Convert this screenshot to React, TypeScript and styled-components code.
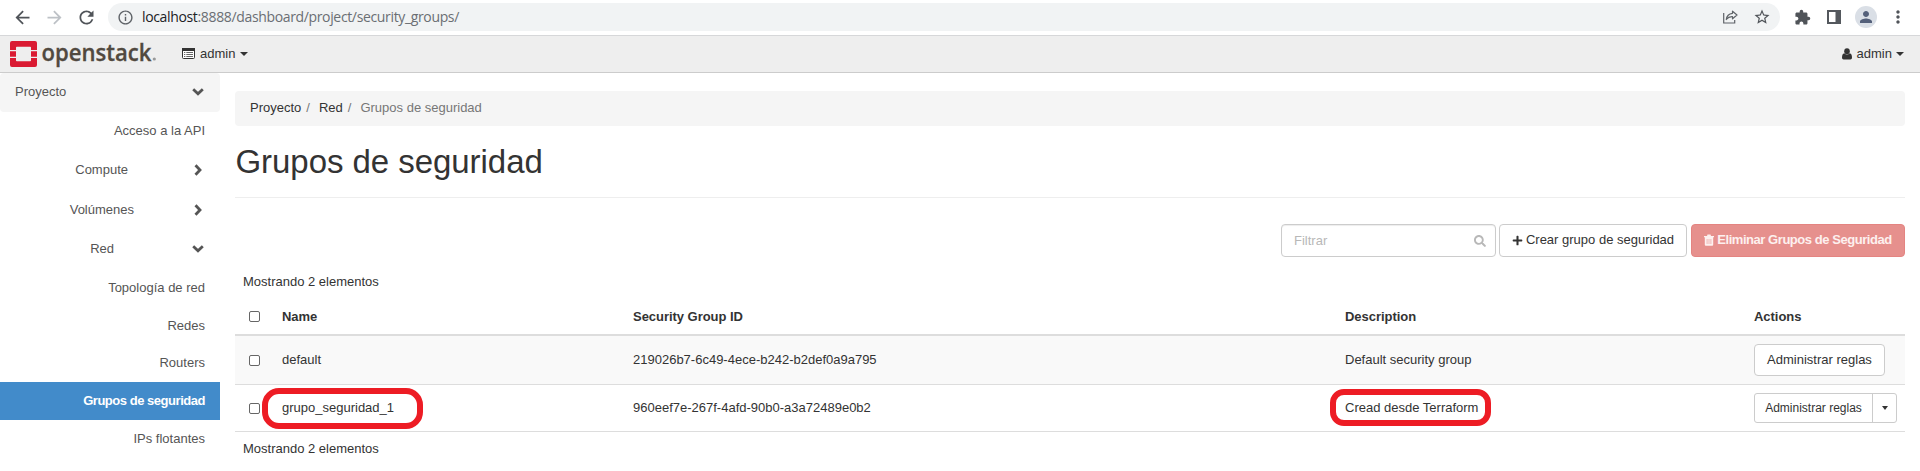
import React from "react";
import styled, { createGlobalStyle } from "styled-components";
import { MdArrowBack, MdArrowForward, MdRefresh, MdInfoOutline, MdStarBorder, MdExtension, MdPerson, MdMoreVert } from "react-icons/md";
import { FaPlus, FaSearch } from "react-icons/fa";

const Global = createGlobalStyle`
  * { box-sizing: border-box; }
  body { margin: 0; background: #fff; color: #333; overflow: hidden;
    font: 13px/18px "Liberation Sans", Arial, sans-serif; }
  svg { display: block; flex: none; overflow: visible; }
`;

const Browser = styled.div`
  height: 36px; display: flex; align-items: flex-start; color: #5f6368;
  border-bottom: 1px solid #d6d7d9; padding: 3px 11px 0 11px;
`;
const NavIcon = styled.span<{ $w: number; $dim?: boolean; $gap?: number }>`
  width: ${p => p.$w}px; height: 28px; display: flex; align-items: center; justify-content: center;
  color: ${p => (p.$dim ? "#bdc1c6" : "#505459")};
  margin-left: ${p => p.$gap ?? 0}px;
`;
const Omnibox = styled.div`
  width: 1672px; height: 28px; border-radius: 14px; background: #f1f3f4;
  display: flex; align-items: center; padding: 0 9px 0 9px; margin-left: 11px;
`;
const Url = styled.span`
  font: 14px/20px "Open Sans", sans-serif; letter-spacing: -0.35px; color: #6a6e73; margin-left: 8px; flex: 1;
  white-space: nowrap;
  b { font-weight: 400; color: #202124; }
`;
const Avatar = styled.span`
  width: 22px; height: 22px; border-radius: 50%; background: #dadfe6; color: #54607a;
  display: flex; align-items: center; justify-content: center;
`;

const Header = styled.header`
  height: 37px; background: #eee; border-bottom: 1px solid #ccc;
  display: flex; align-items: center; padding: 0 16px 0 10px;
`;
const Menu = styled.div<{ $left?: number }>`
  display: flex; align-items: center; gap: 5px; height: 36px; padding-bottom: 1px;
  margin-left: ${p => (p.$left === undefined ? "auto" : `${p.$left}px`)};
`;
const Caret = styled.i<{ $gap?: number }>`
  width: 0; height: 0; border: 4px solid transparent; border-top-color: #333; border-bottom: 0;
  margin-left: ${p => p.$gap ?? 0}px;
`;

const Body = styled.div`display: flex; height: 398px;`;
const Sidebar = styled.nav`width: 220px; color: #555;`;
const Group = styled.div`
  height: 39px; background: #f5f5f5; border-radius: 4px; padding: 0 16px 1px 15px;
  display: flex; align-items: center; justify-content: space-between;
`;
const Section = styled.div<{ $h: number; $gap: number }>`
  height: ${p => p.$h}px; display: flex; align-items: center; justify-content: flex-end;
  gap: ${p => p.$gap}px; padding-right: 16px;
`;
const ChevBox = styled.span`width: 12px; display: flex; justify-content: center;`;
const Item = styled.a<{ $h: number; $active?: boolean }>`
  height: ${p => p.$h}px; display: flex; align-items: center; justify-content: flex-end; padding-right: 15px;
  background: ${p => (p.$active ? "#428bca" : "transparent")};
  color: ${p => (p.$active ? "#fff" : "#555")};
  font-weight: ${p => (p.$active ? 700 : 400)};
  letter-spacing: ${p => (p.$active ? "-0.47px" : "0")};
`;

const Main = styled.main`flex: 1; padding: 18px 15px 0; display: flex; flex-direction: column;`;
const Crumbs = styled.div`
  height: 35px; background: #f5f5f5; border-radius: 4px; padding: 0 15px 1px;
  display: flex; align-items: center; color: #777;
  b { font-weight: 400; color: #333; }
  i { font-style: normal; margin: 0 9px 0 5px; }
`;
const Title = styled.h1`
  margin: 0; height: 72px; padding-top: 17px; border-bottom: 1px solid #eee;
  font-size: 33px; line-height: 38px; font-weight: 400; letter-spacing: -0.05px; text-indent: 0.5px;
`;
const Tools = styled.div`height: 33px; margin-top: 26px; display: flex; justify-content: flex-end;`;
const Filter = styled.div`
  width: 215px; border: 1px solid #ccc; border-radius: 4px; box-shadow: inset 0 1px 1px rgba(0,0,0,.075);
  display: flex; align-items: center; justify-content: space-between; padding: 0 9px 0 12px; color: #b8b8b8;
  margin-right: 3px;
`;
const Button = styled.button<{ $w: number; $h: number; $danger?: boolean }>`
  width: ${p => p.$w}px; height: ${p => p.$h}px; padding: 0 0 1px; white-space: nowrap;
  font: ${p => (p.$danger ? 700 : 400)} 13px/18px "Liberation Sans", Arial, sans-serif;
  letter-spacing: ${p => (p.$danger ? "-0.45px" : "0")};
  display: flex; align-items: center; justify-content: center; gap: 3px; border-radius: 4px;
  border: 1px solid ${p => (p.$danger ? "#e48481" : "#ccc")};
  background: ${p => (p.$danger ? "#e6908d" : "#fff")};
  color: ${p => (p.$danger ? "#fdf0ef" : "#333")};
  margin-left: ${p => (p.$danger ? 4 : 0)}px;
`;
const Split = styled.div`
  display: flex; width: 143px; height: 30px; border: 1px solid #ccc; border-radius: 3px; background: #fff;
  font-size: 12px;
`;
const SplitPart = styled.span<{ $w: number; $line?: boolean }>`
  width: ${p => p.$w}px; display: flex; align-items: center; justify-content: center;
  border-left: ${p => (p.$line ? "1px solid #ccc" : "0")};
  i { border-width: 4px 3.5px 0; }
`;
const Count = styled.div<{ $top: number }>`padding: ${p => p.$top}px 0 0 8px; height: ${p => p.$top + 18}px;`;
const Row = styled.div<{ $h: number; $kind?: "head" | "odd" }>`
  height: ${p => p.$h}px; display: grid; grid-template-columns: 47px 351px 712px 409px 1fr; align-items: center;
  border-bottom: ${p => (p.$kind === "head" ? 2 : 1)}px solid #ddd;
  background: ${p => (p.$kind === "odd" ? "#f9f9f9" : "#fff")};
  font-weight: ${p => (p.$kind === "head" ? 700 : 400)};
  letter-spacing: ${p => (p.$kind === "head" ? "-0.04px" : "0")};
  padding-top: ${p => (p.$kind === "head" ? 8 : 0)}px;
`;
const Check = styled.span`
  width: 11px; height: 11px; border: 1px solid #666; border-radius: 2px; background: #fff; margin-left: 14px;
`;
const Cell = styled.span`position: relative; justify-self: start;`;
const Mark = styled.span<{ $w: number; $h: number; $x: number; $y: number; $r: number }>`
  position: absolute; left: ${p => p.$x}px; top: ${p => p.$y}px; width: ${p => p.$w}px; height: ${p => p.$h}px;
  border: 6px solid #ed1c24; border-radius: ${p => p.$r}px;
`;

const Chevron = ({ down }: { down?: boolean }) => (
  <ChevBox>
    {down ? (
      <svg width="12" height="8" viewBox="0 0 12 8"><path d="M1.2 1.3 6 5.8l4.8-4.5" fill="none" stroke="#555" strokeWidth="2.8" /></svg>
    ) : (
      <svg width="8" height="12" viewBox="0 0 8 12"><path d="M1.500 1.200 6 6l-4.500 4.800" fill="none" stroke="#555" strokeWidth="2.8" /></svg>
    )}
  </ChevBox>
);

const Logo = () => (
  <svg width="150" height="36" viewBox="0 0 150 36">
    <g fill="#da1a32">
      <path d="M2 5h23a2 2 0 0 1 2 2v7h-6v-2.5a.8.8 0 0 0-.8-.8H6.800a.8.8 0 0 0-.8.800V14H0V7a2 2 0 0 1 2-2z" />
      <path d="M0 15.200h6v5.600H0zM21 15.200h6v5.600h-6z" />
      <path d="M0 22h6v2.500a.8.8 0 0 0 .8.800h13.400a.8.8 0 0 0 .8-.8V22h6v7a2 2 0 0 1-2 2H2a2 2 0 0 1-2-2z" />
    </g>
    <text x="31.500" y="25" fontFamily="Open Sans" fontWeight="600" fontSize="23.500" fill="#51493f" stroke="#51493f" strokeWidth=".3" textLength="110" lengthAdjust="spacingAndGlyphs">openstack</text>
    <circle cx="144.300" cy="23" r="1.600" fill="#999" />
  </svg>
);

const ListIcon = () => (
  <svg width="13" height="11" viewBox="0 0 13 11">
    <rect x=".5" y=".5" width="12" height="10" rx="1" fill="#fff" stroke="#333" />
    <path d="M0 0h13v3H0z" fill="#333" />
    <path d="M2 4.500h1.300M4.300 4.500H11M2 6.500h1.300M4.300 6.500H11M2 8.500h1.300M4.300 8.500H11" stroke="#666" />
  </svg>
);

const UserIcon = () => (
  <svg width="10" height="12" viewBox="0 0 10 12" fill="#333">
    <ellipse cx="5" cy="3.200" rx="2.800" ry="3" />
    <path d="M2.300 5.200Q0 5.600 0 9.800 0 11.500 1.600 11.500h6.800Q10 11.500 10 9.800 10 5.600 7.700 5.200 5 8 2.300 5.200z" />
  </svg>
);

const ShareIcon = () => (
  <svg width="15" height="14" viewBox="0 0 15 14" fill="none" stroke="#5f6368" strokeWidth="1.200">
    <path d="M.7 3v10h11v-3" />
    <path d="M9.500 1.200 14 5 9.500 8.800V6.700C7 6.500 5 7.300 3.300 9.500 3.700 6 6 3.700 9.500 3.300z" strokeLinejoin="round" />
  </svg>
);

const TrashIcon = () => (
  <svg width="10" height="12" viewBox="0 0 10 12">
    <path d="M0 2h3l.5-1.500h3L7 2h3v1.200H0z" fill="#fdf0ef" />
    <path d="M.8 3h8.400v7.800a1 1 0 0 1-1 1H1.800a1 1 0 0 1-1-1z" fill="#fdf0ef" />
    <path d="M3.100 5v5M5 5v5M6.900 5v5" stroke="#e6908d" strokeWidth=".6" />
  </svg>
);

const PanelIcon = () => (
  <svg width="14" height="14" viewBox="0 0 14 14">
    <path d="M0 0h14v14H0zM2 2v10h6.500V2z" fill="#54585d" fillRule="evenodd" />
  </svg>
);

export default function App() {
  return (
    <>
      <Global />
      <Browser>
        <NavIcon $w={22}><MdArrowBack size={21} /></NavIcon>
        <NavIcon $w={42} $dim><MdArrowForward size={21} /></NavIcon>
        <NavIcon $w={22}><MdRefresh size={21} /></NavIcon>
        <Omnibox>
          <MdInfoOutline size={17} />
          <Url><b>localhost</b>:8888/dashboard/project/security_groups/</Url>
          <ShareIcon />
          <NavIcon $w={18} $gap={15}><MdStarBorder size={18} /></NavIcon>
        </Omnibox>
        <NavIcon $w={44}><MdExtension size={17} /></NavIcon>
        <NavIcon $w={20}><PanelIcon /></NavIcon>
        <NavIcon $w={44}><Avatar><MdPerson size={18} /></Avatar></NavIcon>
        <NavIcon $w={20}><MdMoreVert size={20} /></NavIcon>
      </Browser>
      <Header>
        <Logo />
        <Menu $left={22}><ListIcon />admin<Caret /></Menu>
        <Menu><UserIcon />admin<Caret $gap={-1} /></Menu>
      </Header>
      <Body>
        <Sidebar>
          <Group>Proyecto<Chevron down /></Group>
          <Item $h={37}>Acceso a la API</Item>
          <Section $h={42} $gap={64}>Compute<Chevron /></Section>
          <Section $h={38} $gap={58}>Volúmenes<Chevron /></Section>
          <Section $h={39} $gap={78}>Red<Chevron down /></Section>
          <Item $h={39}>Topología de red</Item>
          <Item $h={37}>Redes</Item>
          <Item $h={38}>Routers</Item>
          <Item $h={38} $active>Grupos de seguridad</Item>
          <Item $h={37}>IPs flotantes</Item>
        </Sidebar>
        <Main>
          <Crumbs><b>Proyecto</b><i>/</i><b>Red</b><i>/</i>Grupos de seguridad</Crumbs>
          <Title>Grupos de seguridad</Title>
          <Tools>
            <Filter>Filtrar<FaSearch size={12} /></Filter>
            <Button $w={188} $h={33}><FaPlus size={11} />Crear grupo de seguridad</Button>
            <Button $w={214} $h={33} $danger><TrashIcon />Eliminar Grupos de Seguridad</Button>
          </Tools>
          <Count $top={16}>Mostrando 2 elementos</Count>
          <Row $h={45} $kind="head">
            <Check /><Cell>Name</Cell><Cell>Security Group ID</Cell><Cell>Description</Cell><Cell>Actions</Cell>
          </Row>
          <Row $h={49} $kind="odd">
            <Check /><Cell>default</Cell><Cell>219026b7-6c49-4ece-b242-b2def0a9a795</Cell><Cell>Default security group</Cell>
            <Button $w={131} $h={32}>Administrar reglas</Button>
          </Row>
          <Row $h={47}>
            <Check />
            <Cell>grupo_seguridad_1<Mark $x={-20} $y={-11} $w={161} $h={41} $r={17} /></Cell>
            <Cell>960eef7e-267f-4afd-90b0-a3a72489e0b2</Cell>
            <Cell>Cread desde Terraform<Mark $x={-15} $y={-10} $w={161} $h={37} $r={14} /></Cell>
            <Split><SplitPart $w={117}>Administrar reglas</SplitPart><SplitPart $w={24} $line><Caret /></SplitPart></Split>
          </Row>
          <Count $top={8}>Mostrando 2 elementos</Count>
        </Main>
      </Body>
    </>
  );
}
